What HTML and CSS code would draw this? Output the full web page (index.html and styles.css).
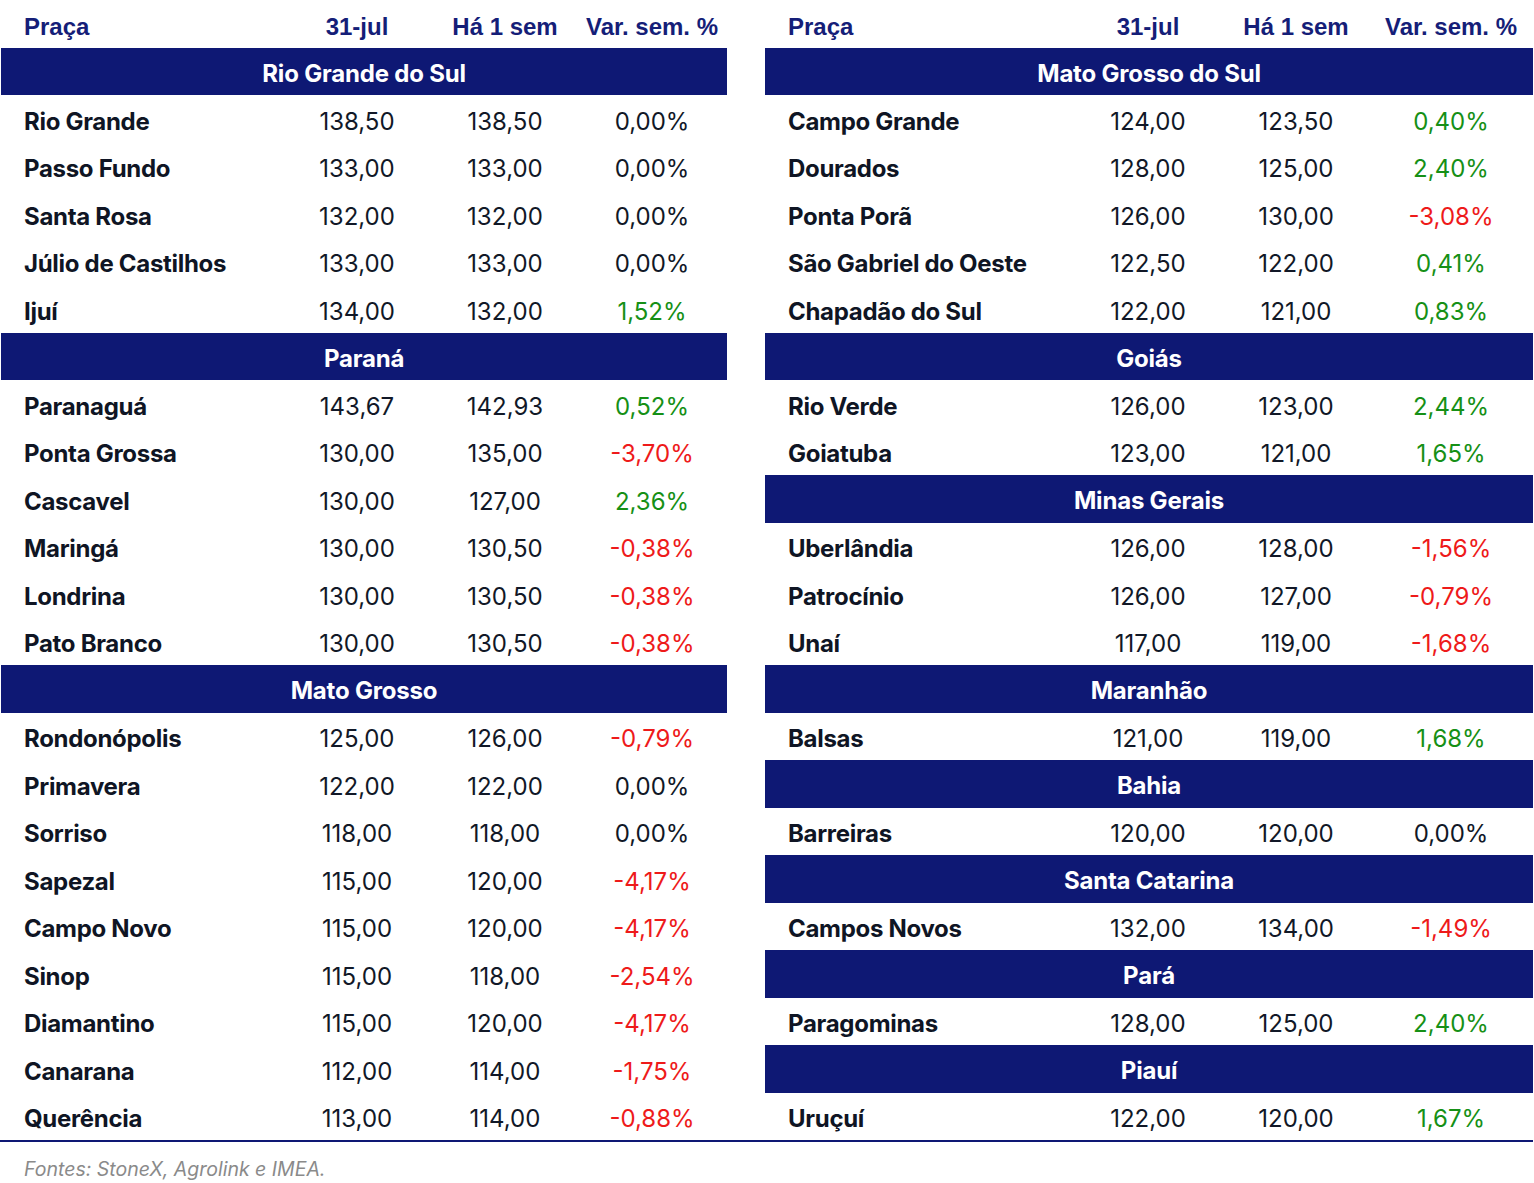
FILE: index.html
```html
<!DOCTYPE html>
<html lang="pt">
<head>
<meta charset="utf-8">
<link rel="stylesheet" href="styles.css">
</head>
<body>
<div class="page">
  <div class="tables">
    <div class="tbl tbl-left">
      <div class="row head"><div class="c1">Praça</div><div>31-jul</div><div>Há 1 sem</div><div>Var. sem. %</div></div>
      <div class="band">Rio Grande do Sul</div>
      <div class="row"><div class="c1">Rio Grande</div><div>138,50</div><div>138,50</div><div>0,00%</div></div>
      <div class="row"><div class="c1">Passo Fundo</div><div>133,00</div><div>133,00</div><div>0,00%</div></div>
      <div class="row"><div class="c1">Santa Rosa</div><div>132,00</div><div>132,00</div><div>0,00%</div></div>
      <div class="row"><div class="c1">Júlio de Castilhos</div><div>133,00</div><div>133,00</div><div>0,00%</div></div>
      <div class="row"><div class="c1">Ijuí</div><div>134,00</div><div>132,00</div><div class="up">1,52%</div></div>
      <div class="band">Paraná</div>
      <div class="row"><div class="c1">Paranaguá</div><div>143,67</div><div>142,93</div><div class="up">0,52%</div></div>
      <div class="row"><div class="c1">Ponta Grossa</div><div>130,00</div><div>135,00</div><div class="down">-3,70%</div></div>
      <div class="row"><div class="c1">Cascavel</div><div>130,00</div><div>127,00</div><div class="up">2,36%</div></div>
      <div class="row"><div class="c1">Maringá</div><div>130,00</div><div>130,50</div><div class="down">-0,38%</div></div>
      <div class="row"><div class="c1">Londrina</div><div>130,00</div><div>130,50</div><div class="down">-0,38%</div></div>
      <div class="row"><div class="c1">Pato Branco</div><div>130,00</div><div>130,50</div><div class="down">-0,38%</div></div>
      <div class="band">Mato Grosso</div>
      <div class="row"><div class="c1">Rondonópolis</div><div>125,00</div><div>126,00</div><div class="down">-0,79%</div></div>
      <div class="row"><div class="c1">Primavera</div><div>122,00</div><div>122,00</div><div>0,00%</div></div>
      <div class="row"><div class="c1">Sorriso</div><div>118,00</div><div>118,00</div><div>0,00%</div></div>
      <div class="row"><div class="c1">Sapezal</div><div>115,00</div><div>120,00</div><div class="down">-4,17%</div></div>
      <div class="row"><div class="c1">Campo Novo</div><div>115,00</div><div>120,00</div><div class="down">-4,17%</div></div>
      <div class="row"><div class="c1">Sinop</div><div>115,00</div><div>118,00</div><div class="down">-2,54%</div></div>
      <div class="row"><div class="c1">Diamantino</div><div>115,00</div><div>120,00</div><div class="down">-4,17%</div></div>
      <div class="row"><div class="c1">Canarana</div><div>112,00</div><div>114,00</div><div class="down">-1,75%</div></div>
      <div class="row"><div class="c1">Querência</div><div>113,00</div><div>114,00</div><div class="down">-0,88%</div></div>
    </div>
    <div class="tbl tbl-right">
      <div class="row head"><div class="c1">Praça</div><div>31-jul</div><div>Há 1 sem</div><div>Var. sem. %</div></div>
      <div class="band">Mato Grosso do Sul</div>
      <div class="row"><div class="c1">Campo Grande</div><div>124,00</div><div>123,50</div><div class="up">0,40%</div></div>
      <div class="row"><div class="c1">Dourados</div><div>128,00</div><div>125,00</div><div class="up">2,40%</div></div>
      <div class="row"><div class="c1">Ponta Porã</div><div>126,00</div><div>130,00</div><div class="down">-3,08%</div></div>
      <div class="row"><div class="c1">São Gabriel do Oeste</div><div>122,50</div><div>122,00</div><div class="up">0,41%</div></div>
      <div class="row"><div class="c1">Chapadão do Sul</div><div>122,00</div><div>121,00</div><div class="up">0,83%</div></div>
      <div class="band">Goiás</div>
      <div class="row"><div class="c1">Rio Verde</div><div>126,00</div><div>123,00</div><div class="up">2,44%</div></div>
      <div class="row"><div class="c1">Goiatuba</div><div>123,00</div><div>121,00</div><div class="up">1,65%</div></div>
      <div class="band">Minas Gerais</div>
      <div class="row"><div class="c1">Uberlândia</div><div>126,00</div><div>128,00</div><div class="down">-1,56%</div></div>
      <div class="row"><div class="c1">Patrocínio</div><div>126,00</div><div>127,00</div><div class="down">-0,79%</div></div>
      <div class="row"><div class="c1">Unaí</div><div>117,00</div><div>119,00</div><div class="down">-1,68%</div></div>
      <div class="band">Maranhão</div>
      <div class="row"><div class="c1">Balsas</div><div>121,00</div><div>119,00</div><div class="up">1,68%</div></div>
      <div class="band">Bahia</div>
      <div class="row"><div class="c1">Barreiras</div><div>120,00</div><div>120,00</div><div>0,00%</div></div>
      <div class="band">Santa Catarina</div>
      <div class="row"><div class="c1">Campos Novos</div><div>132,00</div><div>134,00</div><div class="down">-1,49%</div></div>
      <div class="band">Pará</div>
      <div class="row"><div class="c1">Paragominas</div><div>128,00</div><div>125,00</div><div class="up">2,40%</div></div>
      <div class="band">Piauí</div>
      <div class="row"><div class="c1">Uruçuí</div><div>122,00</div><div>120,00</div><div class="up">1,67%</div></div>
    </div>
  </div>
  <div class="rule"></div>
  <p class="source">Fontes: StoneX, Agrolink e IMEA.</p>
</div>
</body>
</html>
```

FILE: styles.css
```css
html, body {
  margin: 0;
  padding: 0;
  background: #ffffff;
}

.page {
  width: 1534px;
  font-family: Inter, "Liberation Sans", sans-serif;
  color: #111827;
}

.tables {
  display: flex;
  padding-left: 1px;
  gap: 38px;
}

.tbl-left { width: 726px; }
.tbl-right { width: 768px; }

.row {
  display: grid;
  height: 47.5px;
  align-items: center;
  font-size: 24px;
  font-weight: 400;
  padding-top: 5px;
  box-sizing: border-box;
}

.tbl-left .row { grid-template-columns: 280px 152px 144px 150px; }
.tbl-right .row { grid-template-columns: 308px 150px 146px 164px; }

.row > div {
  text-align: center;
  white-space: nowrap;
}

.row > .c1 {
  text-align: left;
  padding-left: 23px;
  font-weight: 700;
  letter-spacing: -0.3px;
  color: #0f1524;
}

.row.head {
  font-family: "Liberation Sans", Arial, sans-serif;
  font-weight: 700;
  font-size: 24px;
  color: #151e78;
  padding-top: 6px;
}

.row.head > div {
  font-weight: 700;
  letter-spacing: 0;
  color: #151e78;
}

.band {
  height: 47.5px;
  box-sizing: border-box;
  padding-top: 4px;
  background: #0e1874;
  color: #ffffff;
  font-weight: 700;
  font-size: 24px;
  letter-spacing: -0.2px;
  display: flex;
  align-items: center;
  justify-content: center;
}

.up { color: #169016; }
.down { color: #ee1a1a; }

.rule {
  width: 1533px;
  height: 2px;
  background: #0e1874;
}

.source {
  margin: 0;
  padding: 15px 0 0 24px;
  font-style: italic;
  font-size: 19.5px;
  color: #8a8a8a;
}
```
